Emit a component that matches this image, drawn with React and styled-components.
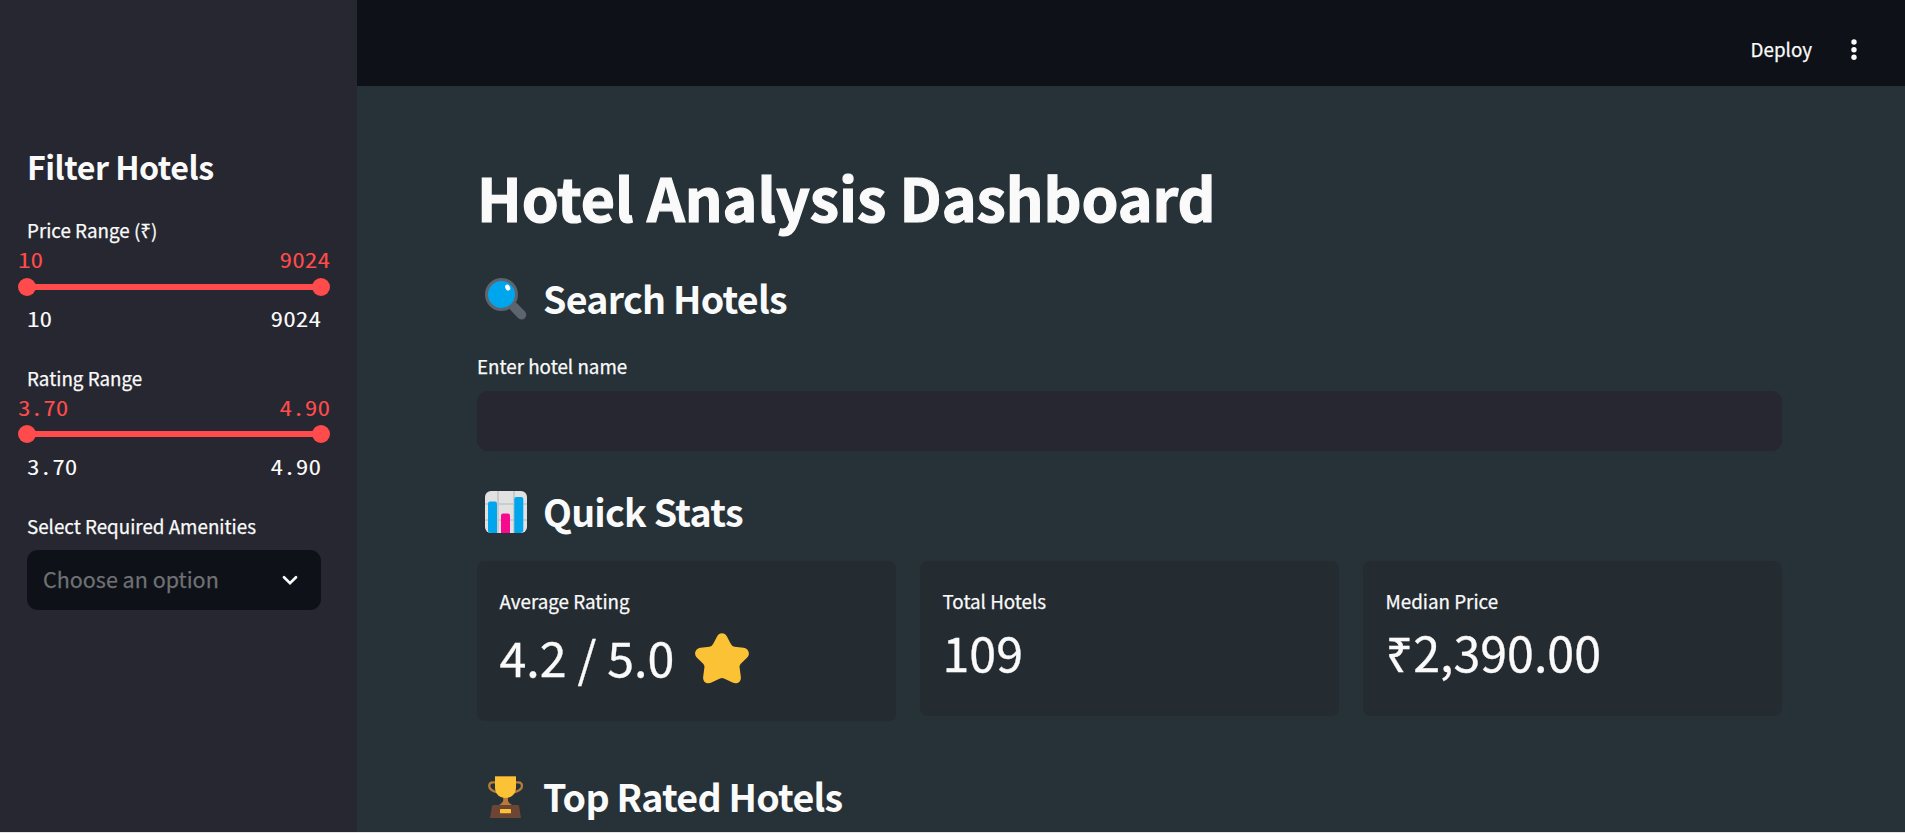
import React from "react";
import styled, { createGlobalStyle } from "styled-components";

const SANS = '"Noto Sans CJK JP", "Noto Sans", sans-serif';
const MONO = '"Noto Sans Mono CJK JP", "Liberation Mono", monospace';

const GlobalStyle = createGlobalStyle`
  * { box-sizing: border-box; }
  html, body { margin: 0; height: 100%; overflow: hidden; }
  body { background: #263238; color: #fafafa; font-family: ${SANS}; }
  h1, h2, p { margin: 0; }
`;

const Page = styled.div`
  display: flex;
  height: 833px;
  overflow: hidden;
  border-bottom: 1px solid #e4e4e2;
`;

const Sidebar = styled.aside`
  flex: 0 0 357px;
  background: #262730;
  padding: 144px 36px 0 27px;
`;

const SidebarTitle = styled.h2`
  font-size: 32.2px;
  line-height: 44px;
  font-weight: 700;
  letter-spacing: -0.5px;
  margin-bottom: 27px;
`;

const FieldLabel = styled.p`
  font-size: 18.8px;
  line-height: 30px;
  white-space: nowrap;
  -webkit-text-stroke: 0.25px currentColor;
`;

const SliderField = styled.div`
  margin-bottom: 32px;
`;

const SliderValues = styled.div`
  display: flex;
  justify-content: space-between;
  font-family: ${MONO};
  font-size: 21px;
  line-height: 26px;

  span {
    transform: scaleX(1.2);
    transform-origin: left center;
  }
  span:last-child { transform-origin: right center; }
`;

const ThumbValues = styled(SliderValues)`
  color: #ff4b4b;
  margin: 1px -9px 0;
`;

const Track = styled.div`
  display: flex;
  align-items: center;
  margin: ${(p) => p.$above}px -9px ${(p) => 15 - p.$above}px;
  height: 18px;
`;

const Thumb = styled.span`
  width: 18px;
  height: 18px;
  border-radius: 50%;
  background: #ff4b4b;
`;

const Rail = styled.span`
  flex: 1;
  height: 6px;
  margin: 0 -2px;
  background: #ff4b4b;
`;

const SelectBox = styled.div`
  display: flex;
  align-items: center;
  justify-content: space-between;
  height: 60px;
  margin-top: 9px;
  padding: 0 23px 3px 16px;
  border-radius: 11px;
  background: #0e1117;
  color: #6f7174;
  font-size: 21.5px;
  -webkit-text-stroke: 0.25px currentColor;

  svg { margin-top: 3px; }
`;

const Main = styled.main`
  flex: 1;
  min-width: 0;
`;

const Header = styled.header`
  display: flex;
  align-items: center;
  justify-content: flex-end;
  height: 86px;
  padding: 12px 48px 0 0;
  background: #0e1117;

  svg { margin-top: 2px; }
`;

const DeployButton = styled.span`
  font-size: 18.8px;
  line-height: 30px;
  margin-right: 39px;
  -webkit-text-stroke: 0.25px currentColor;
`;

const Content = styled.div`
  padding: 74px 123px 0 120px;
`;

const Title = styled.h1`
  font-size: 59.1px;
  line-height: 72px;
  font-weight: 700;
  letter-spacing: -0.05px;
  -webkit-text-stroke: 1.2px currentColor;
  white-space: nowrap;
`;

const SectionTitle = styled.h2`
  display: flex;
  align-items: center;
  height: 48px;
  margin-top: ${(p) => p.$top}px;
  padding-left: 8px;
  font-size: 37.6px;
  line-height: 48px;
  font-weight: 700;
  letter-spacing: -0.75px;

  svg { margin: 1px 16px 0 0; }
`;

const SearchLabel = styled(FieldLabel)`
  margin-top: 29px;
`;

const SearchInput = styled.div`
  height: 60px;
  margin-top: 10px;
  border-radius: 11px;
  background: #262730;
`;

const Metrics = styled.div`
  display: grid;
  grid-template-columns: repeat(3, 1fr);
  gap: 24px;
  align-items: start;
  height: 160px;
  margin-top: 26px;
`;

const MetricCard = styled.div`
  height: ${(p) => p.$height}px;
  padding: 25px 22.5px 0;
  border-radius: 8px;
  background: #242b31;
`;

const MetricValue = styled.div`
  display: flex;
  align-items: center;
  height: ${(p) => p.$line}px;
  font-size: 48.35px;
  line-height: ${(p) => p.$line}px;
  white-space: nowrap;
  -webkit-text-stroke: 0.3px currentColor;

  svg { margin: 3px 0 0 21px; }
`;

function MagnifierIcon() {
  return (
    <svg width="42" height="42" viewBox="0 0 42 42">
      <path d="M29 29 L36.5 36.8" stroke="#5d646e" strokeWidth="9.5" strokeLinecap="round" />
      <circle cx="16.5" cy="16.5" r="15" fill="#00a6ed" stroke="#5d646e" strokeWidth="3" />
      <ellipse cx="22.7" cy="9.6" rx="2.3" ry="3.1" fill="#fff" transform="rotate(-28 22.7 9.6)" />
    </svg>
  );
}

function ChartIcon() {
  return (
    <svg width="42" height="42" viewBox="0 0 42 42">
      <rect width="42" height="42" rx="6" fill="#e1e1e1" />
      <path d="M13 0V42 M29 0V42 M0 13H42 M0 29H42" stroke="#c3c5c7" strokeWidth="1.6" />
      <path d="M3 12.5q0-2 2-2h5q2 0 2 2V42H6q-3-.5-3-2z" fill="#00a6ed" />
      <path d="M16 24.5q0-2 2-2h5q2 0 2 2V42h-9z" fill="#f70a8d" />
      <path d="M29.3 8q0-2 2-2h5q2 0 2 2v32q-1 2-3 2h-6z" fill="#00a6ed" />
    </svg>
  );
}

function TrophyIcon() {
  return (
    <svg width="42" height="42" viewBox="0 0 42 42">
      <path
        d="M10 6.3H8Q4.2 6.3 4.2 10Q4.2 14.5 14 17 M31 6.3h2.2Q37 6.3 37 10Q37 14.5 27 17"
        fill="none"
        stroke="#b97a37"
        strokeWidth="2.3"
      />
      <path d="M18.2 21h4.8v4q.6 2.2 4.5 4.5h-14q3.9-2.3 4.7-4.5z" fill="#b97a37" />
      <path d="M10 0h21v11.5C31 18 26 22 20.5 22S10 18 10 11.5z" fill="#fcc235" />
      <path d="M10 0h21v1H10z" fill="#c98b36" />
      <path d="M9 29h23.5q1.3 0 1.6 1.3L36 42H5l2-11.7Q7.3 29 9 29z" fill="#6d4534" />
      <rect x="15" y="33" width="11" height="4.3" rx=".6" fill="#fcc235" />
    </svg>
  );
}

function StarIcon() {
  return (
    <svg width="54" height="51" viewBox="0 0 54 51">
      <path
        d="M22.2 3.2C24 -.8 30 -.8 31.8 3.2L35.6 10.6Q36.7 13.2 39.5 13.7L48.5 14.7C53.8 15.4 55.6 21.3 52 24.8L45.8 30.8Q44.2 32.4 44.6 34.6L45.8 43.6C46.5 48.8 42 51.8 37.5 49.6L29 45.4Q27 44.4 25 45.4L16.5 49.6C12 51.8 7.5 48.8 8.2 43.6L9.4 34.6Q9.8 32.4 8.2 30.8L2 24.8C-1.6 21.3 .2 15.4 5.5 14.7L14.5 13.7Q17.3 13.2 18.4 10.6Z"
        fill="#fcc235"
      />
    </svg>
  );
}

function ChevronIcon() {
  return (
    <svg width="16" height="11" viewBox="0 0 16 11">
      <path d="M2 2.2L8 8.2L14 2.2" fill="none" stroke="#fafafa" strokeWidth="2.7" strokeLinecap="round" />
    </svg>
  );
}

function MenuIcon() {
  return (
    <svg width="6" height="22" viewBox="0 0 6 22">
      <circle cx="3" cy="3" r="2.7" fill="#fafafa" />
      <circle cx="3" cy="10.7" r="2.7" fill="#fafafa" />
      <circle cx="3" cy="18.2" r="2.7" fill="#fafafa" />
    </svg>
  );
}

function RangeSlider({ label, min, max, above }) {
  return (
    <SliderField>
      <FieldLabel>{label}</FieldLabel>
      <ThumbValues>
        <span>{min}</span>
        <span>{max}</span>
      </ThumbValues>
      <Track $above={above}>
        <Thumb />
        <Rail />
        <Thumb />
      </Track>
      <SliderValues>
        <span>{min}</span>
        <span>{max}</span>
      </SliderValues>
    </SliderField>
  );
}

export default function App() {
  return (
    <>
      <GlobalStyle />
      <Page>
        <Sidebar>
          <SidebarTitle>Filter Hotels</SidebarTitle>
          <RangeSlider label="Price Range (₹)" min="10" max="9024" above={6} />
          <RangeSlider label="Rating Range" min="3.70" max="4.90" above={5} />
          <FieldLabel>Select Required Amenities</FieldLabel>
          <SelectBox>
            <span>Choose an option</span>
            <ChevronIcon />
          </SelectBox>
        </Sidebar>
        <Main>
          <Header>
            <DeployButton>Deploy</DeployButton>
            <MenuIcon />
          </Header>
          <Content>
            <Title>Hotel Analysis Dashboard</Title>
            <SectionTitle $top={42}>
              <MagnifierIcon />
              Search Hotels
            </SectionTitle>
            <SearchLabel>Enter hotel name</SearchLabel>
            <SearchInput />
            <SectionTitle $top={36}>
              <ChartIcon />
              Quick Stats
            </SectionTitle>
            <Metrics>
              <MetricCard $height={160}>
                <FieldLabel>Average Rating</FieldLabel>
                <MetricValue $line={81}>
                  4.2 / 5.0
                  <StarIcon />
                </MetricValue>
              </MetricCard>
              <MetricCard $height={155}>
                <FieldLabel>Total Hotels</FieldLabel>
                <MetricValue $line={71}>109</MetricValue>
              </MetricCard>
              <MetricCard $height={155}>
                <FieldLabel>Median Price</FieldLabel>
                <MetricValue $line={71}>₹2,390.00</MetricValue>
              </MetricCard>
            </Metrics>
            <SectionTitle $top={51}>
              <TrophyIcon />
              Top Rated Hotels
            </SectionTitle>
          </Content>
        </Main>
      </Page>
    </>
  );
}
